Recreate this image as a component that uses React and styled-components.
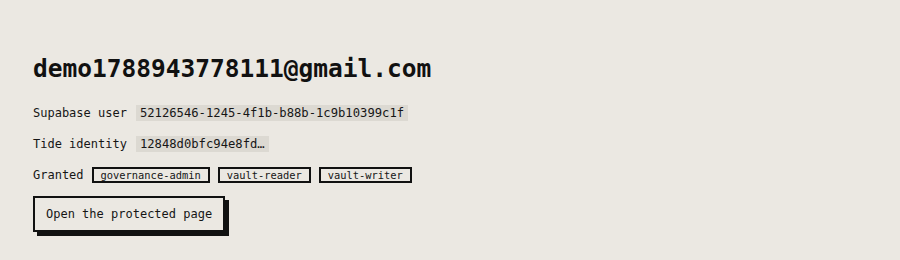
import React from "react";
import styled, { createGlobalStyle } from "styled-components";

const Global = createGlobalStyle`
  html, body { margin: 0; padding: 0; background: #ebe8e2; }
  body { font-family: "DejaVu Sans Mono", "Liberation Mono", monospace; color: #161616; }
`;

const Page = styled.main`
  padding: 54px 33px 20px;
  display: flex;
  flex-direction: column;
  align-items: flex-start;
`;

const Heading = styled.h1`
  margin: 0 0 22px;
  font-size: 24.5px;
  font-weight: 700;
  line-height: 1.2;
  color: #111;
`;

const Row = styled.div`
  display: flex;
  align-items: center;
  gap: 8px;
  font-size: 12px;
  height: 16px;
  margin-bottom: 15px;

  &:last-of-type {
    margin-bottom: 13px;
  }
`;

const Label = styled.span`
  white-space: nowrap;
`;

const Code = styled.code`
  margin-left: 1px;
  font-family: inherit;
  font-size: 12.2px;
  background: #dcd9d2;
  padding: 1px 4px;
  line-height: 14px;
`;

const Tags = styled.div`
  display: flex;
  gap: 8px;
`;

const Tag = styled.span`
  font-size: 10.4px;
  line-height: 12px;
  border: 2px solid #111;
  padding: 0 7px;
  background: #ebe8e2;
`;

const Button = styled.button`
  font-family: inherit;
  font-size: 12px;
  line-height: 14px;
  color: #161616;
  background: #ebe8e2;
  border: 2px solid #111;
  padding: 9px 11px;
  box-shadow: 4px 4px 0 #111;
  cursor: pointer;
`;

export default function App() {
  return (
    <>
      <Global />
      <Page>
        <Heading>demo1788943778111@gmail.com</Heading>
        <Row>
          <Label>Supabase user</Label>
          <Code>52126546-1245-4f1b-b88b-1c9b10399c1f</Code>
        </Row>
        <Row>
          <Label>Tide identity</Label>
          <Code>12848d0bfc94e8fd…</Code>
        </Row>
        <Row>
          <Label>Granted</Label>
          <Tags>
            <Tag>governance-admin</Tag>
            <Tag>vault-reader</Tag>
            <Tag>vault-writer</Tag>
          </Tags>
        </Row>
        <Button>Open the protected page</Button>
      </Page>
    </>
  );
}
